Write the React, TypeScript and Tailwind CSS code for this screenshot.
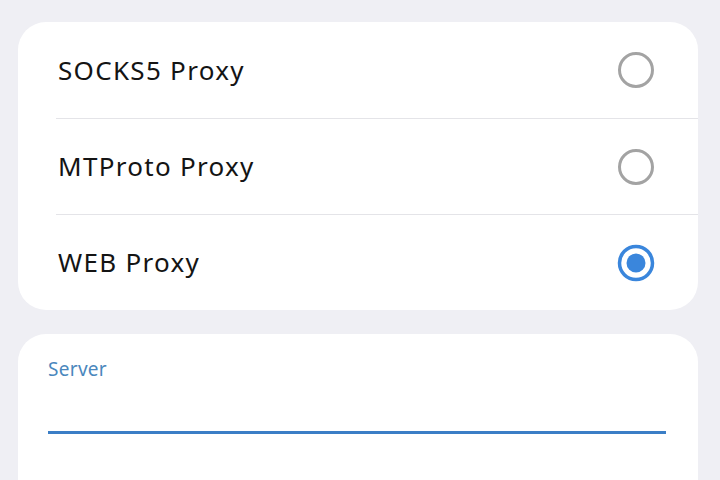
import React from 'react';

const options = [
  { label: 'SOCKS5 Proxy', selected: false },
  { label: 'MTProto Proxy', selected: false },
  { label: 'WEB Proxy', selected: true },
];

function Radio({ selected }: { selected: boolean }) {
  return (
    <svg width="40" height="40" viewBox="0 0 40 40">
      {selected ? (
        <>
          <circle cx="20" cy="20" r="16.5" fill="none" stroke="#3a86dc" strokeWidth="3.5" />
          <circle cx="20" cy="20" r="9.5" fill="#3a86dc" />
        </>
      ) : (
        <circle cx="20" cy="20" r="16.5" fill="none" stroke="#a3a3a3" strokeWidth="3" />
      )}
    </svg>
  );
}

export default function App() {
  return (
    <div className="w-[720px] h-[480px] overflow-hidden bg-[#efeff4] pl-[18px] pr-[22px] pt-[22px] font-['Noto_Sans',sans-serif]">
      <div className="bg-white rounded-[28px] overflow-hidden">
        {options.map((o, i) => (
          <div key={o.label} className="pl-[38px]">
            <div
              className={`flex items-center justify-between h-[96px] pr-[42px] ${
                i > 0 ? 'border-t border-[#e4e4e8]' : ''
              }`}
            >
              <span className="ml-[2px] text-[26px] text-[#141414] tracking-[1.3px]">{o.label}</span>
              <Radio selected={o.selected} />
            </div>
          </div>
        ))}
      </div>

      <div className="mt-[24px] bg-white rounded-[28px] pl-[30px] pr-[32px] pt-[21px] h-[200px]">
        <div className="text-[19px] text-[#4a87bd] tracking-[0.3px]">Server</div>
        <div className="mt-[47px] h-[3px] bg-[#3b7ec6]" />
      </div>
    </div>
  );
}
